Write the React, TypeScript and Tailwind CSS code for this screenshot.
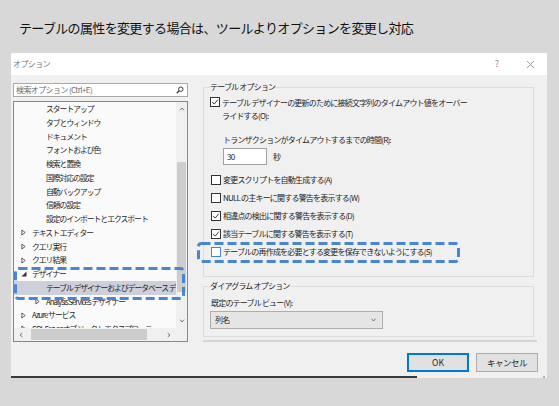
import { ReactNode } from 'react';

type TreeItem = {
  label: string;
  level: 1 | 2;
  arrow?: 'closed' | 'open';
  selected?: boolean;
};

const treeItems: TreeItem[] = [
  { label: 'スタートアップ', level: 2 },
  { label: 'タブとウィンドウ', level: 2 },
  { label: 'ドキュメント', level: 2 },
  { label: 'フォントおよび色', level: 2 },
  { label: '検索と置換', level: 2 },
  { label: '国際対応の設定', level: 2 },
  { label: '自動バックアップ', level: 2 },
  { label: '信頼の設定', level: 2 },
  { label: '設定のインポートとエクスポート', level: 2 },
  { label: 'テキスト エディター', level: 1, arrow: 'closed' },
  { label: 'クエリ実行', level: 1, arrow: 'closed' },
  { label: 'クエリ結果', level: 1, arrow: 'closed' },
  { label: 'デザイナー', level: 1, arrow: 'open' },
  { label: 'テーブル デザイナーおよびデータベース デザイナー', level: 2, selected: true },
  { label: 'Analysis Services デザイナー', level: 2, arrow: 'closed' },
  { label: 'Azure サービス', level: 1, arrow: 'closed' },
  { label: 'SQL Server オブジェクト エクスプローラー', level: 1, arrow: 'closed' },
];

const checkRows = [
  { label: '変更スクリプトを自動生成する(A)', checked: false },
  { label: 'NULL の主キーに関する警告を表示する(W)', checked: false },
  { label: '相違点の検出に関する警告を表示する(D)', checked: true },
  { label: '該当テーブルに関する警告を表示する(T)', checked: true },
  { label: 'テーブルの再作成を必要とする変更を保存できないようにする(S)', checked: false, focus: true },
];

function Arrow({ kind }: { kind?: 'closed' | 'open' }) {
  if (kind === 'closed') {
    return (
      <svg viewBox="0 0 6 8" className="h-[7px] w-[5px]">
        <path d="M1 1 L5 4 L1 7 Z" fill="none" stroke="#444" strokeWidth="1" />
      </svg>
    );
  }
  if (kind === 'open') {
    return (
      <svg viewBox="0 0 6 6" className="h-[6px] w-[6px]">
        <path d="M5.5 0.5 L5.5 5.5 L0.5 5.5 Z" fill="#333" />
      </svg>
    );
  }
  return null;
}

function Check({ checked, focus }: { checked?: boolean; focus?: boolean }) {
  return (
    <span
      className={`flex h-[10px] w-[10px] shrink-0 items-center justify-center border bg-white ${
        focus ? 'border-[#4a86d0]' : 'border-[#333]'
      }`}
    >
      {checked && (
        <svg viewBox="0 0 10 10" className="h-[8px] w-[8px]">
          <path d="M1.5 5 L4 7.6 L8.6 2" fill="none" stroke="#222" strokeWidth="1.1" />
        </svg>
      )}
    </span>
  );
}

function GroupBox({ title, className, children }: { title: string; className: string; children: ReactNode }) {
  return (
    <fieldset className={`border border-[#dcdcdc] px-[6px] ${className}`}>
      <legend className="px-0 leading-[12px] text-[#1e1e1e]">{title}</legend>
      {children}
    </fieldset>
  );
}

// annotation overlay: rounded blue dashed frame
function DashedFrame({ className, w, h }: { className: string; w: number; h: number }) {
  return (
    <svg className={`pointer-events-none absolute ${className}`} width={w} height={h}>
      <rect
        x={1.5}
        y={1.5}
        width={w - 3}
        height={h - 3}
        rx={3}
        fill="none"
        stroke="#4a86d0"
        strokeWidth={3}
        strokeDasharray="9 4"
      />
    </svg>
  );
}

export default function App() {
  return (
    <div
      className="relative h-[406px] w-[559px] overflow-hidden bg-[#d8d8d8] text-[#1e1e1e]"
      style={{ fontFamily: '"Noto Sans CJK JP", "Liberation Sans", sans-serif' }}
    >
      {/* heading */}
      <div className="h-[53px] pl-[19px] pt-[19px] text-[13px] leading-[17px] tracking-[-0.65px] text-[#111]">
        テーブルの属性を変更する場合は、ツールよりオプションを変更し対応
      </div>

      {/* dialog */}
      <div className="ml-[11px] w-[536px]">
        <div className="flex h-[22px] items-center bg-white pl-[2px] pr-[12px] text-[8px] text-[#777]">
          <span className="flex-1 tracking-[-0.6px]">オプション</span>
          <span className="mr-[27px] text-[9px] text-[#888]">?</span>
          <svg viewBox="0 0 10 10" className="h-[9px] w-[9px]">
            <path d="M1 1 L9 9 M9 1 L1 9" stroke="#888" strokeWidth="0.9" />
          </svg>
        </div>

        <div className="flex h-[301px] bg-[#f0f0f0] text-[8px]">
          {/* left column */}
          <div className="w-[192px] pl-[2px] pt-[8px]">
            <div className="flex h-[14px] w-[175px] items-center border border-[#a9a9a9] bg-white pl-[2px] pr-[3px]">
              <span className="flex-1 tracking-[-0.6px] text-[#6d6d6d]">検索オプション (Ctrl+E)</span>
              <svg viewBox="0 0 10 10" className="h-[8px] w-[8px]">
                <circle cx="6" cy="4" r="2.8" fill="none" stroke="#333" strokeWidth="1.2" />
                <path d="M4 6 L1 9" stroke="#333" strokeWidth="1.6" />
              </svg>
            </div>

            <div className="mt-[4px] flex h-[241px] w-[175px] flex-col border border-[#828790] bg-[#fafafa]">
              <div className="flex h-[226px]">
                <div className="w-[162px] overflow-hidden">
                  {treeItems.map((item) => (
                    <div
                      key={item.label}
                      className={`flex h-[13.75px] items-center whitespace-nowrap text-[7.8px] tracking-[-1px] ${
                        item.level === 1 ? 'pl-[7px]' : 'pl-[21px]'
                      } ${item.selected ? 'bg-[#cdd0da]' : ''}`}
                    >
                      <span className="flex w-[11px] shrink-0 items-center">
                        <Arrow kind={item.arrow} />
                      </span>
                      <span>{item.label}</span>
                    </div>
                  ))}
                </div>
                <div className="flex w-[11px] flex-col items-center bg-[#f0f0f0]">
                  <svg viewBox="0 0 8 6" className="mt-[5px] h-[4px] w-[6px]">
                    <path d="M1 5 L4 1.5 L7 5" fill="none" stroke="#555" strokeWidth="1.2" />
                  </svg>
                  <div className="mt-[51px] h-[130px] w-[9px] bg-[#cdcdcd]" />
                  <div className="flex-1" />
                  <svg viewBox="0 0 8 6" className="mb-[5px] h-[4px] w-[6px]">
                    <path d="M1 1 L4 4.5 L7 1" fill="none" stroke="#555" strokeWidth="1.2" />
                  </svg>
                </div>
              </div>
              <div className="flex h-[13px]">
                <div className="flex w-[162px] items-center bg-[#f0f0f0]">
                  <svg viewBox="0 0 6 8" className="ml-[5px] h-[6px] w-[4px]">
                    <path d="M5 1 L1.5 4 L5 7" fill="none" stroke="#555" strokeWidth="1.2" />
                  </svg>
                  <div className="ml-[8px] h-[11px] w-[116px] bg-[#cdcdcd]" />
                  <div className="flex-1" />
                  <svg viewBox="0 0 6 8" className="mr-[5px] h-[6px] w-[4px]">
                    <path d="M1 1 L4.5 4 L1 7" fill="none" stroke="#555" strokeWidth="1.2" />
                  </svg>
                </div>
                <div className="flex-1 bg-[#f0f0f0]" />
              </div>
            </div>
          </div>

          {/* right column */}
          <div className="flex flex-col pt-[6px]">
            <GroupBox title="テーブル オプション" className="h-[196px] w-[331px] tracking-[-0.8px]">
              <div className="mt-[3px] flex gap-[2px]">
                <span className="mt-[1px]">
                  <Check checked />
                </span>
                <div className="leading-[13px]">
                  テーブル デザイナーの更新のために接続文字列のタイムアウト値をオーバー
                  <br />
                  ライドする(O):
                </div>
              </div>
              <div className="mt-[12px] pl-[13px] leading-[12px]">トランザクションがタイムアウトするまでの時間(R):</div>
              <div className="mt-[2px] flex items-center pl-[13px]">
                <div className="flex h-[17px] w-[44px] items-center border border-[#a0a0a0] bg-white pl-[3px]">30</div>
                <span className="ml-[6px]">秒</span>
              </div>
              <div className="mt-[6px]">
                {checkRows.map((row) => (
                  <div key={row.label} className="flex h-[18px] items-center gap-[2px] pl-[1px]">
                    <Check checked={row.checked} focus={row.focus} />
                    <span>{row.label}</span>
                  </div>
                ))}
              </div>
            </GroupBox>

            <GroupBox title="ダイアグラム オプション" className="mt-[3px] h-[57px] w-[331px] tracking-[-0.8px]">
              <div className="mt-[5px] pl-[1px] leading-[12px]">既定のテーブル ビュー(V):</div>
              <div className="mt-[2px] flex h-[18px] w-[173px] items-center border border-[#adadad] bg-[#e5e5e5] pl-[4px] pr-[5px]">
                <span className="flex-1">列名</span>
                <svg viewBox="0 0 8 6" className="h-[4px] w-[7px]">
                  <path d="M1 1 L4 4.5 L7 1" fill="none" stroke="#444" strokeWidth="1" />
                </svg>
              </div>
            </GroupBox>

            <div className="mt-[3px] h-[2px] w-[334px] bg-[#d5d5d5]" />

            <div className="mt-[11px] flex w-[335px] justify-end gap-[7px] text-[8.5px]">
              <button className="flex h-[19px] w-[62px] items-center justify-center border-2 border-[#0078d7] bg-[#e1e1e1]">
                OK
              </button>
              <button className="flex h-[19px] w-[62px] items-center justify-center border border-[#adadad] bg-[#e1e1e1] tracking-[-0.5px]">
                キャンセル
              </button>
            </div>
          </div>
        </div>

        {/* bottom edge */}
        <div className="flex h-[2px]">
          <div className="w-[406px] bg-[#3a3a3a]" />
          <div className="flex flex-1 justify-end bg-[#f0f0f0] pr-[2px]">
            <div className="h-[2px] w-[2px] bg-[#b0b0b0]" />
          </div>
        </div>
      </div>

      <DashedFrame className="left-[14px] top-[267px]" w={171} h={33} />
      <DashedFrame className="left-[197px] top-[242px]" w={263} h={21} />
    </div>
  );
}
